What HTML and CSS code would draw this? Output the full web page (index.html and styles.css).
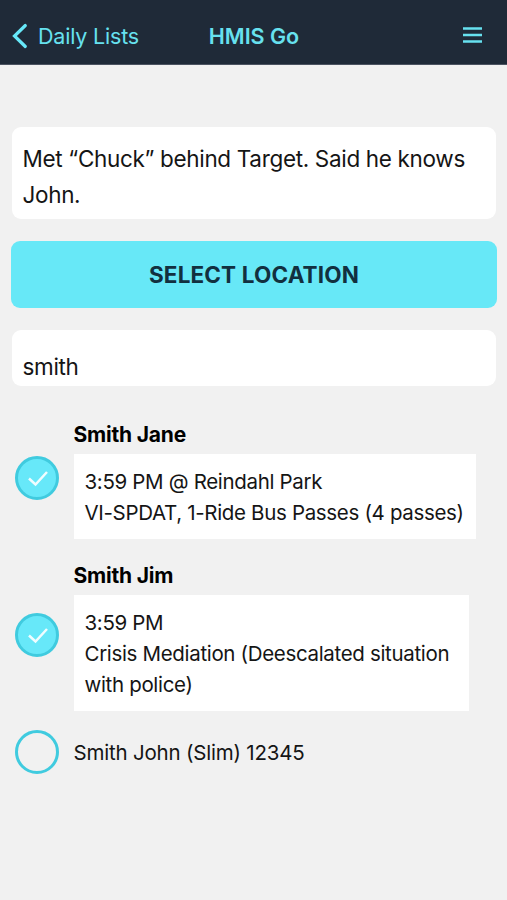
FILE: index.html
```html
<!DOCTYPE html>
<html lang="en">
<head>
  <meta charset="UTF-8">
  <meta name="viewport" content="width=device-width, initial-scale=1.0">
  <title>HMIS Go</title>
  <link rel="stylesheet" href="styles.css">
</head>
<body>
  <header class="navbar">
    <a class="back">
      <svg width="16" height="26" viewBox="0 0 16 26"><path d="M13.3 2.5 2.5 13 13.3 23.5"/></svg>
      <span>Daily Lists</span>
    </a>
    <h1 class="title">HMIS Go</h1>
    <svg class="menu" width="19" height="16" viewBox="0 0 19 16"><path d="M0 1.5h19M0 8h19M0 14.5h19"/></svg>
  </header>

  <main class="content">
    <div class="note">Met “Chuck” behind Target. Said he knows<br>John.</div>
    <button class="location">SELECT LOCATION</button>
    <div class="search">smith</div>

    <div class="results">
      <div class="person jane">
        <span class="check checked"><svg width="22" height="18" viewBox="0 0 22 18"><path d="M2 9.5 8.5 15.5 20 3"/></svg></span>
        <div class="info">
          <h2 class="name">Smith Jane</h2>
          <div class="services">
            <div>3:59 PM @ Reindahl Park</div>
            <div class="detail">VI-SPDAT, 1-Ride Bus Passes (4 passes)</div>
          </div>
        </div>
      </div>
      <div class="person jim">
        <span class="check checked"><svg width="22" height="18" viewBox="0 0 22 18"><path d="M2 9.5 8.5 15.5 20 3"/></svg></span>
        <div class="info">
          <h2 class="name">Smith Jim</h2>
          <div class="services">
            <div>3:59 PM</div>
            <div class="detail">Crisis Mediation (Deescalated situation<br>with police)</div>
          </div>
        </div>
      </div>
      <div class="person john">
        <span class="check"></span>
        <div class="plain">Smith John (Slim) 12345</div>
      </div>
    </div>
  </main>
</body>
</html>
```

FILE: styles.css
```css
* {
  box-sizing: border-box;
}

body {
  margin: 0;
  min-height: 900px;
  background: #f1f1f1;
  color: #151515;
  font-family: Inter, "Liberation Sans", sans-serif;
  font-size: 22.5px;
  letter-spacing: -0.33px;
}

.navbar {
  display: grid;
  grid-template-columns: 1fr auto 1fr;
  align-items: center;
  height: 65px;
  padding: 7px 12px 0;
  border-bottom: 1px solid #4b5361;
  background: #1f2a38;
  color: #67e1ef;
}

.navbar svg,
.check svg {
  fill: none;
  stroke: currentColor;
}

.back {
  display: flex;
  align-items: center;
  gap: 10px;
  font-size: 21.5px;
  letter-spacing: -0.2px;
}

.back svg {
  stroke-width: 3.2;
  stroke-linecap: round;
  color: #67e8f9;
}

.title {
  margin: 0 0 0 1px;
  font-size: 21.5px;
  font-weight: 600;
  letter-spacing: 0;
}

.menu {
  justify-self: end;
  margin: 0 13px 1px 0;
  stroke-width: 2.6;
}

.content {
  padding: 62px 11px 0;
}

.note,
.search {
  margin: 0 0 0 1px;
  background: #fff;
  border-radius: 9px;
  white-space: nowrap;
}

.note {
  height: 92px;
  padding: 14px 10.5px;
  line-height: 36px;
}

.location {
  display: block;
  width: 486px;
  height: 67px;
  margin: 22px 0;
  border: none;
  border-radius: 9px;
  background: #67e8f7;
  color: #12303f;
  font: inherit;
  font-size: 22.5px;
  font-weight: 700;
  letter-spacing: 0.15px;
}

.search {
  height: 56px;
  padding: 23px 10.5px 0;
  line-height: 28px;
}

.results {
  padding: 35px 4px 0;
  font-size: 20.5px;
}

.person {
  display: flex;
  align-items: center;
  gap: 14.5px;
  white-space: nowrap;
}

.jane,
.jim {
  margin-bottom: 23px;
}

.check {
  display: flex;
  align-items: center;
  justify-content: center;
  flex: none;
  width: 44px;
  height: 44px;
  border: 3px solid #40cbdf;
  border-radius: 50%;
  color: #f0fdff;
}

.checked {
  position: relative;
  top: -2px;
  background: #67e8f9;
}

.check svg {
  stroke-width: 2.5;
  margin-left: 2px;
}

.name {
  margin: 0 0 5px;
  color: #000;
  font-size: 21px;
  font-weight: 700;
  line-height: 28px;
  letter-spacing: -0.2px;
}

.services {
  height: 85px;
  width: 402px;
  padding: 11.5px 11px;
  background: #fff;
  line-height: 31px;
}

.jim .services {
  width: 395px;
  height: 116px;
}

.john {
  margin-top: -4px;
}

.plain {
  letter-spacing: -0.2px;
}
```
